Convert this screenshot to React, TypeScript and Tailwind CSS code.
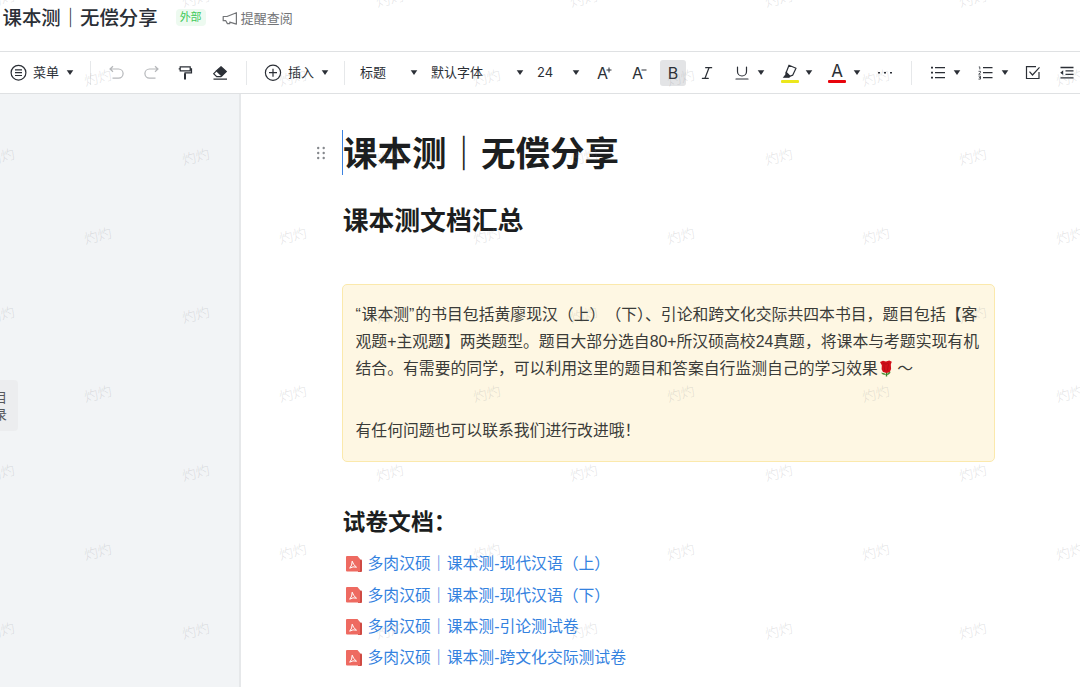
import { Italic, Underline } from "lucide-react";
import type { ReactNode } from "react";

const links = [
  "多肉汉硕｜课本测-现代汉语（上）",
  "多肉汉硕｜课本测-现代汉语（下）",
  "多肉汉硕｜课本测-引论测试卷",
  "多肉汉硕｜课本测-跨文化交际测试卷",
];

function Icon({ className = "", children }: { className?: string; children: ReactNode }) {
  return (
    <svg
      className={`h-[18px] w-[18px] shrink-0 ${className}`}
      viewBox="0 0 18 18"
      fill="none"
      stroke="currentColor"
      strokeWidth="1.2"
    >
      {children}
    </svg>
  );
}

function Caret({ className = "" }: { className?: string }) {
  return (
    <svg className={`h-2 w-2 shrink-0 ${className}`} viewBox="0 0 8 8">
      <path d="M.7 1.2h6.6L4 6z" fill="#2b2f36" />
    </svg>
  );
}

function Divider({ className = "" }: { className?: string }) {
  return <div className={`h-6 w-px shrink-0 bg-[#e6e8ea] ${className}`} />;
}

function Header() {
  return (
    <header className="flex h-[51px] shrink-0 items-start pl-[2.5px]">
      <h1 className="mt-[4px] text-[19.4px] leading-7 font-medium text-[#2b2f36]">课本测｜无偿分享</h1>
      <span className="mt-[9px] ml-[18px] flex h-[17px] w-[30px] items-center justify-center rounded-sm bg-[#edfaf0] text-[11px] text-[#3fc95b]">
        外部
      </span>
      <div className="mt-[9px] ml-[16px] flex items-center text-[13px] leading-[19px] text-[#737578]">
        <Icon>
          <path d="M1.2 6.5v4.2h2.6l1.6 2.9h2.4v-1.5l6.6 2V2.7L5 6.5z" strokeLinejoin="round" />
        </Icon>
        <span className="ml-px">提醒查阅</span>
      </div>
    </header>
  );
}

function Toolbar() {
  return (
    <div className="relative z-10 flex h-[43px] shrink-0 items-center overflow-hidden border-y border-[#dfe1e3] bg-white pl-[9px] text-[13px] whitespace-nowrap text-[#2b2f36]">
      <Icon>
        <circle cx="9.5" cy="8.7" r="7.4" />
        <path d="M6 5.9h7M6 8.7h7M6 11.5h7" />
      </Icon>
      <span className="ml-[6px] w-[27px] shrink-0">菜单</span>
      <Caret className="ml-[6px]" />
      <Divider className="ml-[16px]" />
      <Icon className="ml-[17px] text-[#b5b7ba]">
        <path d="M5 2.2 2 5l3 2.8M2.3 5h8.2a4.6 4.6 0 0 1 0 9.2H4.5" />
      </Icon>
      <Icon className="ml-[16px] text-[#b5b7ba]">
        <path d="M13 2.2 16 5l-3 2.8M15.7 5H7.5a4.6 4.6 0 0 0 0 9.2h6" />
      </Icon>
      <Icon className="ml-[16px]">
        <path d="M4.2 2.8h10v4h-10zM4.2 4.8H2.7M14.2 4.8h1.3v4H9v1.5" strokeWidth="1.2" />
        <path d="M9 9.5v6" strokeWidth="2" />
      </Icon>
      <Icon className="ml-[17px]">
        <path d="M10 2.7 15.3 7.5 10.8 11.9 5.5 6.8z" fill="currentColor" />
        <path d="M5.5 6.8 2.7 9.7l3 3h4.2l1-1M2.5 15.2h13.5" />
      </Icon>
      <Divider className="ml-[17px]" />
      <Icon className="ml-[17px]">
        <circle cx="9" cy="8.7" r="7.6" />
        <path d="M9 4.7v8M5 8.7h8" />
      </Icon>
      <span className="ml-[6px] w-[26px] shrink-0">插入</span>
      <Caret className="ml-[7px]" />
      <Divider className="ml-[15px]" />

      <span className="ml-[15px] w-[50px] shrink-0">标题</span>
      <Caret />
      <span className="ml-[13px] w-[85px] shrink-0">默认字体</span>
      <Caret />
      <span className="ml-[13px] w-[35px] shrink-0 font-[Inter]">24</span>
      <Caret />
      <div className="ml-[17px] flex w-[17px] shrink-0 items-center font-[Inter] text-[16px]">
        A
        <svg className="-ml-[2px] mb-[6px] h-[6px] w-[6px] shrink-0" viewBox="0 0 6 6" stroke="currentColor">
          <path d="M.5 3h5M3 .5v5" />
        </svg>
      </div>
      <div className="ml-[18px] flex w-[17px] shrink-0 items-center font-[Inter] text-[16px]">
        A
        <svg className="-ml-[2px] mb-[6px] h-[6px] w-[6px] shrink-0" viewBox="0 0 6 6" stroke="currentColor">
          <path d="M.5 3h5" />
        </svg>
      </div>
      <div className="ml-[11px] flex h-[26px] w-[26px] shrink-0 items-center justify-center rounded-[3px] bg-[#e3e4e6] font-[Inter] text-[16px]">
        B
      </div>
      <Italic className="ml-[13px] h-4 w-4 shrink-0" strokeWidth={1.8} />
      <Underline className="ml-[17.5px] h-[18px] w-[18px] shrink-0" strokeWidth={1.6} />
      <Caret className="ml-[6.5px]" />
      <div className="ml-[16px] flex w-[18px] shrink-0 flex-col items-center pt-[1px]">
        <svg className="h-[15px] w-[18px]" viewBox="0 0 18 15" fill="none" stroke="currentColor" strokeWidth="1.2">
          <path d="M8 1.2 15 4.2l-3.2 6.9-4.2 1.6L5 9z" strokeLinejoin="round" />
          <path d="M5.3 8.4 8.9 12l-.8 1.2H3l1.8-2.2z" fill="currentColor" />
        </svg>
        <div className="mt-px h-[3px] w-full rounded-[1px] bg-[#ece71c]" />
      </div>
      <Caret className="ml-[6px]" />
      <div className="ml-[15px] flex w-[18px] shrink-0 flex-col items-center pt-[1px] font-[Inter] text-[17px] leading-[15px]">
        A
        <div className="mt-px h-[3px] w-full rounded-[1px] bg-[#e8040c]" />
      </div>
      <Caret className="ml-[7px]" />
      <Icon className="ml-[15px]">
        <path d="M2 8h2v1.6H2zM8 8h2v1.6H8zM14 8h2v1.6h-2z" fill="currentColor" stroke="none" />
      </Icon>
      <Divider className="ml-[17px]" />
      <Icon className="ml-[17px]">
        <path d="M6 3.7h10M6 8.7h10M6 13.7h10" />
        <path d="M2 2.8h2v1.8H2zM2 7.8h2v1.8H2zM2 12.8h2v1.8H2z" fill="currentColor" stroke="none" />
      </Icon>
      <Caret className="ml-[6px]" />
      <Icon className="ml-[16px]">
        <path d="M6 3.7h9.5M6 8.7h9.5M6 13.7h9.5" />
        <path d="M1.8 2.9h1v2.5M1.5 7.3h2v1.2l-1.8 1.7h2M1.5 12.1h2v3h-2M2 13.6h1.5" strokeWidth=".8" />
      </Icon>
      <Caret className="ml-[6px]" />
      <Icon className="ml-[15px]">
        <path d="M15 8v6.5H2.5V2.7H12M5.5 7.7l3 3.3 7-7.6" />
      </Icon>
      <Icon className="ml-[16px]">
        <path d="M2.5 3.5h13M7.5 6.9h8M7.5 10.4h8M2.5 13.8h13" strokeWidth="1.3" />
        <path d="M5.2 6.3v4.8L2.2 8.7z" fill="currentColor" stroke="none" />
      </Icon>
    </div>
  );
}

function Rose() {
  return (
    <svg className="mx-[1px] inline h-[17px] w-[14px] align-[-3px]" viewBox="0 0 14 17">
      <path d="M7.5 11v5.5" stroke="#3b7d2b" strokeWidth="1.4" />
      <path d="M7 15Q3.5 15.2 2 12.8q3.5-.5 5.2 2.2zM7.8 15q.5-3 3.8-3.3-.5 2.8-3.8 3.3z" fill="#4c9135" />
      <path d="M1 2 4 .8l3 .6 3.2-1 2.6 1.4-1 2.8.3 4.4-1.3 3L7.6 13 4 12 2.6 9.3l.2-4.1z" fill="#d20f18" />
      <path d="M3.6 3.2q3 2 6.7-.3M4.8 4.4l1 6.4M9.6 4l-1.3 6.8" fill="none" stroke="#a90a13" strokeWidth=".6" />
    </svg>
  );
}

function PdfIcon() {
  return (
    <svg className="h-4 w-4 shrink-0" viewBox="0 0 16 16" fill="none">
      <path d="M12 3.5h3q1 0 1 1V15q0 1-1 1h-3z" fill="#cf4a43" />
      <path d="M1 0h10.5L14 3v12.5H1q-1 0-1-1V1q0-1 1-1z" fill="#ee6a61" />
      <path d="M6.2 5.2q.9 3.6 4.3 6-3.6-1.2-6.8 1 2.6-2.8 2.5-7z" stroke="#fff" strokeLinejoin="round" />
    </svg>
  );
}

function Document() {
  return (
    <main className="min-w-0 flex-1 bg-white pl-[74px] text-[#1c1e20]">
      <div className="mt-[36px] flex h-[46px] items-center">
        <svg className="h-[14px] w-[10px]" viewBox="0 0 10 14" fill="#85888d">
          {[2, 7, 12].map((y) => (
            <g key={y}>
              <circle cx="3.2" cy={y} r="1.2" />
              <circle cx="8.7" cy={y} r="1.2" />
            </g>
          ))}
        </svg>
        <div className="mb-[2px] ml-[17px] h-[45px] w-px bg-[#3b82e0]" />
        <h1 className="mt-[2px] text-[34.5px] leading-[46px] font-bold whitespace-nowrap">课本测｜无偿分享</h1>
      </div>

      <div className="ml-[27px]">
        <h2 className="mt-[26px] ml-[.7px] text-[25.8px] leading-[38px] font-bold">课本测文档汇总</h2>

        <section className="mt-[44px] h-[178px] w-[653px] rounded-[5px] border border-[#fbe9ac] bg-[#fef7e3] pt-[16px] pl-[12.5px] text-[15.84px] leading-[27px] whitespace-nowrap text-[#3a3b38]">
          <p>
            <span className="tracking-[.8px]">“</span>课本测<span className="tracking-[1px]">”</span>
            的书目包括黄廖现汉（上）<span className="ml-[8px]">（下）、</span>
            引论和跨文化交际共四本书目，题目包括【客
          </p>
          <p>观题+主观题】两类题型。题目大部分选自80+所汉硕高校24真题，将课本与考题实现有机</p>
          <p>
            结合。有需要的同学，可以利用这里的题目和答案自行监测自己的学习效果
            <Rose /> <span className="-ml-px">～</span>
          </p>
          <p className="mt-[35px]">有任何问题也可以联系我们进行改进哦！</p>
        </section>

        <h3 className="mt-[42px] ml-[.5px] text-[22.8px] leading-[36px] font-bold">试卷文档：</h3>
        <ul className="mt-[8.5px] pl-[4px]">
          {links.map((text) => (
            <li key={text} className="flex h-[31.3px] items-center text-[15.83px] whitespace-nowrap text-[#3482df]">
              <PdfIcon />
              <a className="ml-[5.5px]">{text}</a>
            </li>
          ))}
        </ul>
      </div>
    </main>
  );
}

// Rows of the watermark, every other one is shifted by half a column
function Watermark() {
  return (
    <div className="pointer-events-none absolute inset-0 z-20 overflow-hidden text-[14px] font-light text-[#8a8d92]/25">
      <div className="-mt-[40px] -ml-[96px] w-[1400px]">
        {Array.from({ length: 9 }, (_, row) => (
          <div key={row} className="flex h-[79px] items-center odd:pl-0 even:pl-[97px]">
            {Array.from({ length: 7 }, (_, col) => (
              <div key={col} className="w-[194.4px] shrink-0 text-center">
                <span className="inline-block -rotate-[14deg]">灼灼</span>
              </div>
            ))}
          </div>
        ))}
      </div>
    </div>
  );
}

export default function App() {
  return (
    <div className="relative flex h-[687px] w-[1080px] flex-col overflow-hidden bg-white font-['Liberation_Sans','Noto_Sans_CJK_SC',sans-serif]">
      <Header />
      <Toolbar />
      <div className="flex min-h-0 flex-1">
        <aside className="w-[241px] shrink-0 border-r-2 border-[#e6e8ea] bg-[#f2f4f6] pt-[286px]">
          <div className="flex h-[51px] w-[18px] flex-col justify-center overflow-hidden rounded-r bg-[#ecedef] text-[13px] leading-[17px] text-[#55585d]">
            <span className="-ml-[6px]">目</span>
            <span className="-ml-[6px]">录</span>
          </div>
        </aside>
        <Document />
      </div>
      <Watermark />
    </div>
  );
}
